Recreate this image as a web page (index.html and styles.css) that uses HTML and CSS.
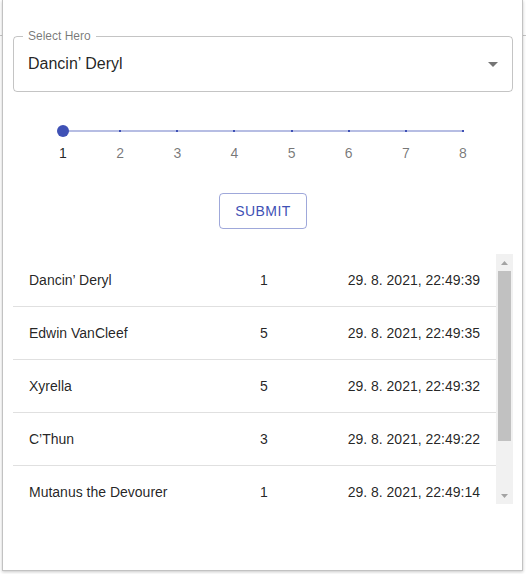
FILE: index.html
```html
<!DOCTYPE html>
<html lang="en">
<head>
<meta charset="utf-8">
<title>Select Hero</title>
<link rel="stylesheet" href="styles.css">
</head>
<body>
<div class="dialog">
  <div class="field">
    <span class="field-label">Select Hero</span>
    <div class="field-value">Dancin’ Deryl</div>
    <svg class="field-arrow" width="24" height="24" viewBox="0 0 24 24"><path d="M7 10l5 5 5-5z"/></svg>
  </div>

  <div class="slider">
    <div class="rail">
      <div class="track"></div>
      <span class="mark" style="left:0%"></span>
      <span class="mark" style="left:14.2857%"></span>
      <span class="mark" style="left:28.5714%"></span>
      <span class="mark" style="left:42.8571%"></span>
      <span class="mark" style="left:57.1429%"></span>
      <span class="mark" style="left:71.4286%"></span>
      <span class="mark" style="left:85.7143%"></span>
      <span class="mark" style="left:100%"></span>
      <span class="thumb" style="left:0%"></span>
    </div>
    <div class="labels">
      <span class="label active" style="left:0%">1</span>
      <span class="label" style="left:14.2857%">2</span>
      <span class="label" style="left:28.5714%">3</span>
      <span class="label" style="left:42.8571%">4</span>
      <span class="label" style="left:57.1429%">5</span>
      <span class="label" style="left:71.4286%">6</span>
      <span class="label" style="left:85.7143%">7</span>
      <span class="label" style="left:100%">8</span>
    </div>
  </div>

  <div class="actions">
    <button class="btn-outlined">SUBMIT</button>
  </div>

  <div class="table-wrap">
    <div class="table">
      <div class="row"><div class="cell">Dancin’ Deryl</div><div class="cell">1</div><div class="cell date">29. 8. 2021, 22:49:39</div></div>
      <div class="row"><div class="cell">Edwin VanCleef</div><div class="cell">5</div><div class="cell date">29. 8. 2021, 22:49:35</div></div>
      <div class="row"><div class="cell">Xyrella</div><div class="cell">5</div><div class="cell date">29. 8. 2021, 22:49:32</div></div>
      <div class="row"><div class="cell">C’Thun</div><div class="cell">3</div><div class="cell date">29. 8. 2021, 22:49:22</div></div>
      <div class="row"><div class="cell">Mutanus the Devourer</div><div class="cell">1</div><div class="cell date">29. 8. 2021, 22:49:14</div></div>
    </div>
    <div class="scrollbar">
      <div class="sb-btn"><svg width="7" height="4" viewBox="0 0 7 4"><polygon points="0,4 3.5,0 7,4"/></svg></div>
      <div class="sb-thumb"></div>
      <div class="sb-space"></div>
      <div class="sb-btn"><svg width="7" height="4" viewBox="0 0 7 4"><polygon points="0,0 7,0 3.5,4"/></svg></div>
    </div>
  </div>
</div>
</body>
</html>
```

FILE: styles.css
```css
* { box-sizing: border-box; }

html, body {
  margin: 0;
  height: 100%;
}

body {
  font-family: "Liberation Sans", Arial, sans-serif;
  background: #fff linear-gradient(to bottom, transparent 35px, #c6c6c6 35px, #c6c6c6 36px, transparent 36px);
  overflow: hidden;
}

.dialog {
  margin-left: 2px;
  width: 521px;
  height: 571px;
  background: #fff;
  border: 1px solid #c2c2c2;
  border-top: none;
  box-shadow: 0 1px 3px rgba(0, 0, 0, 0.22);
  padding: 36px 9px 0 10px;
}

/* Outlined select */
.field {
  position: relative;
  height: 56px;
  border: 1px solid rgba(0, 0, 0, 0.23);
  border-radius: 4px;
  padding: 0 14px;
  display: flex;
  align-items: center;
}

.field-label {
  position: absolute;
  top: -8px;
  left: 9px;
  padding: 0 5px;
  background: #fff;
  font-size: 12px;
  line-height: 14px;
  color: rgba(0, 0, 0, 0.54);
}

.field-value {
  font-size: 16px;
  line-height: 19px;
  color: rgba(0, 0, 0, 0.87);
  margin-top: -1px;
}

.field-arrow {
  position: absolute;
  right: 7px;
  top: 15px;
  fill: rgba(0, 0, 0, 0.54);
}

/* Slider */
.slider {
  width: 400px;
  margin: 33px auto 0;
}

.rail {
  position: relative;
  height: 12px;
}

.track {
  position: absolute;
  left: 0;
  right: 0;
  top: 5px;
  height: 2px;
  background: rgba(63, 81, 181, 0.38);
}

.mark {
  position: absolute;
  top: 5px;
  width: 2px;
  height: 2px;
  margin-left: -1px;
  background: #3f51b5;
}

.thumb {
  position: absolute;
  top: 0;
  width: 12px;
  height: 12px;
  margin-left: -6px;
  border-radius: 50%;
  background: #3f51b5;
}

.labels {
  position: relative;
  height: 20px;
  margin-top: 6px;
}

.label {
  position: absolute;
  top: 0;
  transform: translateX(-50%);
  font-size: 14px;
  line-height: 20px;
  color: rgba(0, 0, 0, 0.54);
}

.label.active {
  color: rgba(0, 0, 0, 0.87);
}

/* Button */
.actions {
  display: flex;
  justify-content: center;
  margin-top: 30px;
}

.btn-outlined {
  height: 36px;
  padding: 5px 15px;
  border: 1px solid rgba(63, 81, 181, 0.5);
  border-radius: 4px;
  background: transparent;
  color: #3f51b5;
  font-family: "Liberation Sans", Arial, sans-serif;
  font-size: 14px;
  font-weight: 500;
  line-height: 24px;
  letter-spacing: 0.02857em;
}

/* Table */
.table-wrap {
  display: flex;
  height: 250px;
  margin-top: 25px;
}

.table {
  flex: 1;
  overflow: hidden;
}

.row {
  display: grid;
  grid-template-columns: 231px 1fr auto;
  border-bottom: 1px solid #e0e0e0;
  font-size: 14px;
  line-height: 20px;
  color: rgba(0, 0, 0, 0.87);
}

.cell {
  padding: 16px;
}

.cell.date {
  text-align: right;
}

/* Scrollbar */
.scrollbar {
  width: 17px;
  background: #f1f1f1;
  display: flex;
  flex-direction: column;
}

.sb-btn {
  height: 17px;
  display: flex;
  align-items: center;
  justify-content: center;
  fill: #a3a3a3;
}

.sb-thumb {
  height: 170px;
  margin: 0 2px;
  background: #c1c1c1;
}

.sb-space {
  flex: 1;
}
```
